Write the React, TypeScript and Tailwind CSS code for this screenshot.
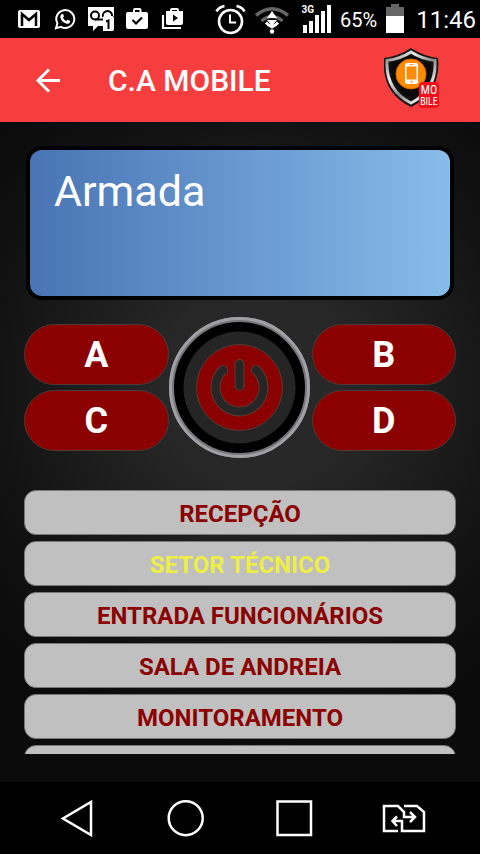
import clsx from "clsx";

const zones = [
  { id: 1, name: "RECEPÇÃO", open: false },
  { id: 2, name: "SETOR TÉCNICO", open: true },
  { id: 3, name: "ENTRADA FUNCIONÁRIOS", open: false },
  { id: 4, name: "SALA DE ANDREIA", open: false },
  { id: 5, name: "MONITORAMENTO", open: false },
  { id: 6, name: "", open: false },
];

function StatusBar() {
  return (
    <div className="flex h-[38px] shrink-0 items-center justify-between bg-black pl-[18px] pr-1 text-white">
      <div className="flex items-center gap-3">
        <svg width="24" height="26" viewBox="0 0 24 26" aria-label="Gmail">
          <rect x="0" y="4" width="22" height="18" rx="2" fill="#fff" />
          <path d="M4 20V8l7 6 7-6v12" fill="none" stroke="#000" strokeWidth="2.500" />
        </svg>
        <svg width="22" height="24" viewBox="0 0 24 24" aria-label="WhatsApp">
          <path d="M2.200 22l1.500-5.300A9.800 9.800 0 1 1 7.400 20.500z" fill="none" stroke="#fff" strokeWidth="2.200" />
          <path
            d="M8.500 6.500c.6-.4 1.200-.2 1.500.4l.8 1.900c.1.500-.1.800-1 1.800.8 1.600 2 2.800 3.800 3.600.9-1.200 1.200-1.400 1.700-1.200l2 1c.5.300.5.700.3 1.300-.5 1.600-2.400 2.200-3.900 1.800-3.400-1-5.700-3.200-6.800-6.400-.4-1.600.3-3.400 1.600-4.200z"
            fill="#fff"
          />
        </svg>
        <svg width="26" height="26" viewBox="0 0 26 26" aria-label="Voicemail">
          <path d="M0 1h26v9h-1v15H15v-5h-5l-5 5v-5H0z" fill="#fff" />
          <g fill="none" stroke="#000" strokeWidth="2">
            <circle cx="7" cy="9.500" r="4" />
            <path d="M7 13.500h8M15 11a4 4 0 0 1 9-2.500V11" />
          </g>
          <rect x="15" y="10" width="11" height="15" rx="2" fill="#fff" />
          <path d="M18 15.500l2.500-1v8.500" fill="none" stroke="#000" strokeWidth="2" />
        </svg>
        <svg width="22" height="24" viewBox="0 0 22 24" aria-label="Updates installed">
          <path
            d="M9 1h4.500a2 2 0 0 1 2 2v2H20a2 2 0 0 1 2 2v13a2 2 0 0 1-2 2H2a2 2 0 0 1-2-2V7a2 2 0 0 1 2-2h5V3a2 2 0 0 1 2-2zm0 2v2h4.500V3z"
            fill="#fff"
            fillRule="evenodd"
          />
          <path d="M6.500 13l3.500 3.500 6-6" fill="none" stroke="#000" strokeWidth="2.200" />
        </svg>
        <svg width="24" height="24" viewBox="0 0 24 24" aria-label="Play Store">
          <path
            d="M12 1h5a2 2 0 0 1 2 2v1h4v12a2 2 0 0 1-2 2H8a2 2 0 0 1-2-2V4h4V3a2 2 0 0 1 2-2zm0 2v1h5V3zm1 4.500v7l5-3.500z"
            fill="#fff"
            fillRule="evenodd"
          />
          <path d="M3 8v13h18" fill="none" stroke="#fff" strokeWidth="2.200" />
        </svg>
      </div>
      <div className="flex items-center gap-[9px]">
        <svg width="31" height="32" viewBox="0 0 31 32" aria-label="Alarm">
          <g fill="none" stroke="#fff" strokeWidth="2.600">
            <circle cx="15.500" cy="18.500" r="11.500" />
            <path d="M15 11.500v8h6" strokeWidth="2" />
            <path d="M1.500 8.500Q4 4 9.500 3M29.500 8.500Q27 4 21.500 3" />
          </g>
        </svg>
        <svg width="34" height="30" viewBox="0 0 34 30" aria-label="Wi-Fi">
          <g fill="none" stroke="#666" strokeWidth="3.500">
            <path d="M1 11.500Q17-2 33 11.500" />
            <path d="M6.500 17Q17 8 27.500 17" />
          </g>
          <path d="M17 7l5 7H12zM12 16h10l-5 6z" fill="#fff" />
          <path d="M11 18.500l3 3M23 18.500l-3 3M14 21l3 2 3-2" fill="none" stroke="#fff" strokeWidth="3" />
          <circle cx="17" cy="27.500" r="2.200" fill="#fff" />
        </svg>
        <div className="flex items-start pl-1">
          <span className="-mr-3 text-[10px] font-bold leading-3">3G</span>
          <svg width="29" height="30" viewBox="0 0 29 30" aria-label="Signal">
            <path d="M1 21h4v8H1zM7 17h4v12H7zM13 11h4v18h-4zM19 7h4v22h-4zM25 1h4v28h-4z" fill="#fff" />
          </svg>
        </div>
        <span className="pt-0.5 text-[20px]">65%</span>
        <svg width="18" height="30" viewBox="0 0 18 30" aria-label="Battery">
          <path d="M5 0h8v3h5v9H0V3h5z" fill="#666" />
          <path d="M0 12h18v17H0z" fill="#fff" />
        </svg>
        <span className="pl-[3px] pt-0.5 text-[24px]">11:46</span>
      </div>
    </div>
  );
}

function ShieldLogo() {
  return (
    <svg width="56" height="64" viewBox="0 0 56 64" aria-label="C.A Mobile">
      <defs>
        <linearGradient id="rim" x1="0" y1="0" x2="1" y2="1">
          <stop offset="0" stopColor="#777" />
          <stop offset="0.3" stopColor="#eee" />
          <stop offset="0.550" stopColor="#888" />
          <stop offset="0.8" stopColor="#eee" />
          <stop offset="1" stopColor="#555" />
        </linearGradient>
      </defs>
      <path d="M27 0Q39 8 54 10C56 32 48 49 27 59 6 49-2 32 0 10Q15 8 27 0z" fill="#151515" />
      <path
        d="M27 4Q38 11 51 12.500C52 32 45 46 27 55 9 46 2 32 3 12.500Q16 11 27 4z"
        fill="#111"
        stroke="url(#rim)"
        strokeWidth="3"
      />
      <path d="M27 8Q37 14 47 15C47 31 42 43 27 51 12 43 7 31 7 15Q17 14 27 8z" fill="#090909" />
      <circle cx="27" cy="26" r="15" fill="#ff8c00" stroke="#d96d00" />
      <rect x="21" y="15" width="13" height="21" rx="2" fill="#fff" />
      <rect x="22.500" y="18.500" width="10" height="13" fill="#ff8c00" />
      <path d="M25.500 16.700h4" stroke="#ff8c00" />
      <circle cx="27.500" cy="33.700" r="1" fill="#ff8c00" />
      <rect x="35" y="34" width="20" height="26" rx="4" fill="#f0101c" />
      <g fill="#fff" textAnchor="middle" className="font-['Liberation_Sans_Narrow','Roboto_Condensed',Roboto,sans-serif]">
        <text x="45" y="46" fontSize="12">MO</text>
        <text x="45" y="57" fontSize="10">BILE</text>
      </g>
    </svg>
  );
}

function PartitionButton({ label }: { label: string }) {
  return (
    <button className="h-[61px] rounded-full border border-[#523838] bg-[#8b0000] text-[36px] font-bold leading-none text-white">
      {label}
    </button>
  );
}

function PowerButton() {
  return (
    <button aria-label="Armar" className="mr-0.5 h-[143px] w-[141px] shrink-0">
      <svg viewBox="0 0 141 143" className="size-full">
        <circle cx="70.500" cy="71.500" r="68" fill="#000" stroke="#77777b" strokeWidth="5" />
        <circle cx="70.500" cy="71.500" r="69" fill="none" stroke="#a0a0a5" strokeWidth="3" />
        <circle cx="70.500" cy="71.500" r="56" fill="#252525" />
        <circle cx="70.500" cy="71.500" r="43" fill="#8b0000" stroke="#553c34" />
        <g fill="none" strokeLinecap="round">
          <path d="M54 54A24 24 0 1 0 87 54M70.500 48v22" stroke="#64392f" strokeWidth="10" />
          <path d="M54 54A24 24 0 1 0 87 54M70.500 48v22" stroke="#262626" strokeWidth="8" />
        </g>
      </svg>
    </button>
  );
}

function NavBar() {
  return (
    <nav className="flex h-[72px] shrink-0 items-center justify-between bg-black pl-[60px] pr-[54px]">
      <button aria-label="Voltar">
        <svg width="36" height="38" viewBox="0 0 36 38" fill="none" stroke="#fff" strokeWidth="2.500">
          <path d="M31 3v33L3 19.500z" />
        </svg>
      </button>
      <button aria-label="Início">
        <svg width="40" height="38" viewBox="0 0 40 38" fill="none" stroke="#fff" strokeWidth="2.500">
          <circle cx="20.700" cy="19.200" r="17" />
        </svg>
      </button>
      <button aria-label="Recentes">
        <svg width="40" height="38" viewBox="0 0 40 38" fill="none" stroke="#fff" strokeWidth="2.500">
          <path d="M4.500 2.500H38V36H4.500z" />
        </svg>
      </button>
      <button aria-label="Trocar SIM">
        <svg width="44" height="30" viewBox="0 0 44 30" fill="none" stroke="#fff" strokeWidth="2.500">
          <path d="M16 28H2V3h14l6 6v5h10M28 9l5 5-5 5" />
          <path d="M22 3h13l7 6v19H20V18H11M15 13.500L10.500 18l4.500 5" />
        </svg>
      </button>
    </nav>
  );
}

export default function App() {
  return (
    <div className="flex h-screen flex-col overflow-hidden bg-[#0c0c0c] font-[Roboto,sans-serif]">
      <StatusBar />
      <header className="flex h-[84px] shrink-0 items-center bg-[#f73e3e] pl-8 pr-10 text-white">
        <button aria-label="Voltar">
          <svg width="32" height="32" viewBox="0 0 32 32" fill="none" stroke="#fff" strokeWidth="3">
            <path d="M28 16.500H6M17 5.500l-11 11 11 11" />
          </svg>
        </button>
        <h1 className="flex-1 pl-11 text-[30px] font-medium">C.A MOBILE</h1>
        <ShieldLogo />
      </header>

      <main className="flex min-h-0 flex-1 flex-col bg-[radial-gradient(circle_at_54%_40%,#2a2a2a_0px,#272727_100px,#121212_270px,#0b0b0b_360px)] px-6 pb-7 pt-6">
        <section className="mx-[2px] h-[154px] shrink-0 rounded-2xl border-4 border-black bg-linear-to-r from-[#4a74b4] to-[#88bdea] px-6 pt-3 text-[43px] leading-[58px] text-white">
          Armada
        </section>

        <section className="mt-4 flex shrink-0 items-center">
          <div className="grid flex-1 gap-[5px]">
            <PartitionButton label="A" />
            <PartitionButton label="C" />
          </div>
          <PowerButton />
          <div className="grid flex-1 gap-[5px]">
            <PartitionButton label="B" />
            <PartitionButton label="D" />
          </div>
        </section>

        <ul className="mt-[31px] flex min-h-0 flex-1 flex-col gap-[6px] overflow-hidden">
          {zones.map((zone) => (
            <li key={zone.id} className="shrink-0">
              <button
                className={clsx(
                  "h-[45px] w-full rounded-xl border border-[#777] bg-[#c0c0c0] pt-[2px] text-[24px] font-bold leading-none",
                  zone.open ? "text-[#eeee44]" : "text-[#8b0000]",
                )}
              >
                {zone.name}
              </button>
            </li>
          ))}
        </ul>
      </main>
      <NavBar />
    </div>
  );
}
